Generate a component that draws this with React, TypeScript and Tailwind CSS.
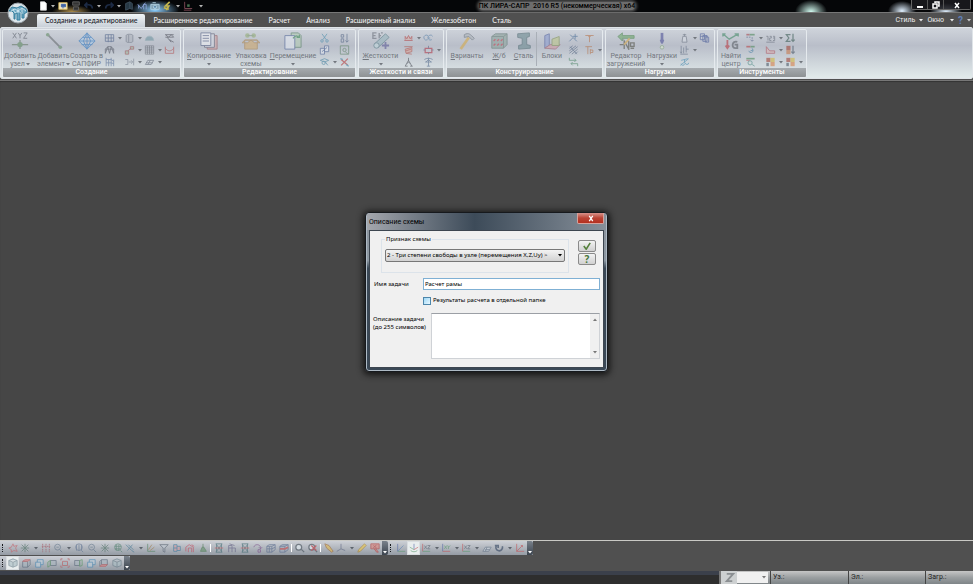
import React, { useState } from 'react';
import clsx from 'clsx';

// small drawings, all on a 12x12 grid
const glyphs: Record<string, React.ReactNode> = {
  grid: <path d="M1 2h10v8H1zM1 6h10M4.500 2v9M8 2v9" stroke="#3f5580" />,
  truss: <path d="M1 10V5l3-3h4l3 3v5M1 5h10M1 10l3-8 2 8 2-8 3 8" stroke="#4b4f5c" />,
  frame: <path d="M2 1v10M5 3v8M8 1v10M11 3v8M2 3h6l3 2M2 7h6l3 1" stroke="#506a94" />,
  cylinder: <path d="M2 3c0-2 8-2 8 0v7c0 2-8 2-8 0zM5 2v9" fill="#aeb4bd" stroke="#666f7e" />,
  copyNode: <path d="M1 7h4v4H1zM7 2h4v3H7zM4 7l4-3" stroke="#9b4c4c" fill="#9fb89f" />,
  arrowBox: <path d="M1 3h3v6H1M5 6h4M8 4l2 2-2 2M11 2v8" stroke="#6e7787" />,
  dome: <path d="M1 9c0-7 10-7 10 0z" fill="#6e94a0" stroke="#8ba6ae" />,
  mesh: <path d="M1 1h10v10H1zM1 3.500h10M1 6h10M1 8.500h10M3.500 1v10M6 1v10M8.500 1v10" stroke="#454a55" strokeWidth=".7" />,
  slab: <path d="M1 9l3-5h7l-3 5zM4 9l3-5M2 7h8" stroke="#596173" />,
  beams: <path d="M1 2h10M1 5h10M1 2l4 3 3-3 3 3M6 8l3 2 2 1M3 5l5 6" stroke="#3c3f49" />,
  span: <path d="M1 2v8h10V2M1 4c3 4 7 4 10 0" stroke="#b04848" />,
  scissors: <path d="M3 1l5 7M9 1L4 8M3 11a1.500 1.500 0 100-3 1.500 1.500 0 000 3zM9 11a1.500 1.500 0 100-3 1.500 1.500 0 000 3z" stroke="#3a86a8" />,
  pages: <path d="M1 4h5v7H1zM6 1h5v7H6zM3 8l6-5" stroke="#41598d" fill="#dfe4ee" />,
  mirror: <path d="M1 4l5-2 5 2-5 2zM3 7a2 2 0 104 0 2 2 0 10-4 0M7 6l3 4" stroke="#37799a" />,
  sort: <path d="M2 2h3v3H2zM2 7h3v4H2zM9 1v10M7 9l2 2 2-2" stroke="#44597c" />,
  lens: <path d="M1 1h10v10H1zM4 6a2 2 0 104 0 2 2 0 10-4 0M7 8l3 3" stroke="#52785a" />,
  cross: (
    <g>
      <path d="M2 3l8 7M10 2l-8 8" stroke="#b23b3b" strokeWidth="1.500" />
      <path d="M1 2l3 1M8 9l3 2" stroke="#3a86a8" strokeWidth="1.500" />
    </g>
  ),
  crown: <path d="M1 9h10M2 8V4l2 3 2-4 2 4 2-3v4" stroke="#b03a3a" fill="#d9a9a0" />,
  crab: <path d="M1 2h10M2 5l8-2v5l-7 2zM3 7l6-2M3 10l7 1" stroke="#b04a42" fill="#d6a49a" />,
  legs: <path d="M6 1v4M6 4l-4 7M6 4l4 7M4 8l2-2 2 2M2 11h3M8 11h3" stroke="#3d4149" />,
  rings: <path d="M6 4a3 3 0 10-1 4M11 4a3 3 0 10-1 4M5 6h3" stroke="#4d7aa5" />,
  node: (
    <g>
      <path d="M2 4h8v5H2z" stroke="#b23a4a" strokeWidth="1.500" />
      <path d="M6 1v3M6 9v2M0 6h2M10 6h2" stroke="#4f5b80" />
    </g>
  ),
  mast: <path d="M1 3c3-2 7-2 10 0M6 1v10M2 6h8M4 11h4M3 6l3-3 3 3" stroke="#4b6488" />,
  rebar: <path d="M2 2l8 8M8 1v6M5 4h6M1 10l4-4" stroke="#365f8d" />,
  hatch: <path d="M1 4l4-3M1 7l8-6M1 10l10-8M4 11l7-6M8 11l3-3M2 2l8 9" stroke="#4b5e7b" />,
  link: <path d="M1 4h8M7 2l2 2-2 2M11 8H3M5 6L3 8l2 2M1 1v3M11 8v3" stroke="#43805f" />,
  tee: <path d="M1 3h10M6 3v8M4 3l2 2 2-2" stroke="#b46a3c" />,
  tr: <path d="M1 2h8M4 2v9M7 5v6M7 6h3v3H7" stroke="#b46a3c" />,
  weight: <path d="M4 4h4l1 7H3zM6 1v3M4 2h4" stroke="#616a78" fill="#d5dae2" />,
  loads: <path d="M2 1v8M5 3v7M8 1v8M1 8l1 2 1-2M1 11h9M8 5h3" stroke="#59657b" />,
  scale: <path d="M2 4l8-2M6 3v4M2 8a2 2 0 104 0M7 7a2 2 0 104 0M1 10l10-8" stroke="#3b86ad" />,
  stack: <path d="M1 1h5v7H1zM4 3h5v7H4zM7 5h4v6H7zM1 4h9" stroke="#3b4f91" />,
  flags: (
    <g>
      <path d="M1 2h4" stroke="#a84a52" strokeWidth="2" />
      <path d="M5 2h6" stroke="#4f8a5c" strokeWidth="2" />
      <path d="M1 5h6M8 5v5M6 8l2 2 2-2" stroke="#4b5a80" strokeDasharray="2 1" />
    </g>
  ),
  rotate: (
    <g>
      <path d="M1 2h5" stroke="#b8484a" strokeWidth="2" />
      <path d="M6 2h5" stroke="#4f8a5c" strokeWidth="2" />
      <path d="M4 7a2.500 2.500 0 105-1M8 4l1 2-3 1" stroke="#38779c" />
    </g>
  ),
  inspect: (
    <g>
      <path d="M1 2h10" stroke="#4f8a5c" strokeWidth="2" />
      <path d="M1 4h4" stroke="#b8484a" />
      <path d="M3 7a2.500 2.500 0 105 0 2.500 2.500 0 10-5 0M8 9l3 2" stroke="#3a8078" />
    </g>
  ),
  numbers: <path d="M1 4h2v5M5 4h2v2H5v3h2M9 4h2v5H9M9 6h2M1 11h10" stroke="#5d6471" />,
  diagram: <path d="M1 10V2l4 5h6v3z" stroke="#ac4b55" fill="#d8b4b4" />,
  palette: (
    <g stroke="none">
      <path d="M1 1h5v5H1z" fill="#a2483b" />
      <path d="M6 1h5v5H6z" fill="#d1b541" />
      <path d="M6 6h5v5H6z" fill="#d8824a" />
      <path d="M1 7h3v4H1z" fill="#4c5968" />
    </g>
  ),
  sigma: <path d="M6 2H1l3 4-3 4h5M9 1v9M7 8l2 2 2-2" stroke="#3f5f58" strokeWidth="1.500" />,
  bars: (
    <g>
      <path d="M1 1h5v5H1z" fill="#a2483b" />
      <path d="M1 6h5v5H1z" fill="#c77a4e" />
      <path d="M9 1v9M7 8l2 2 2-2" stroke="#4c5968" strokeWidth="1.500" />
    </g>
  ),
  star: <path d="M6 1l1 3 4-1-2 3 2 4-4-1-3 2V8L1 6l3-1z" stroke="#c66068" />,
  burst: <path d="M6 1v10M1 6h10M2 2l8 8M10 2l-8 8" stroke="#4f7165" />,
  columns: <path d="M2 1v10M6 1v10M10 1v10M1 4h10" stroke="#a24b55" strokeDasharray="2 1" />,
  zoomOut: <path d="M2 5a3.500 3.500 0 107 0 3.500 3.500 0 10-7 0M8 8l3 3M4 5h3" stroke="#5d7187" />,
  zoomBars: <path d="M3 2v7M6 2v7M9 2v7M2 5a4 4 0 108 0 4 4 0 10-8 0M9 9l2 2" stroke="#5f7391" />,
  zoomMesh: <path d="M2 5a4 4 0 108 0 4 4 0 10-8 0M2 4h8M2 7h7M4 2v7M7 2v7M9 9l2 2" stroke="#4f7f6c" />,
  slash: <path d="M1 2l7 7M4 2l6 6M8 9l3 2M9 2L3 9" stroke="#3f7590" />,
  filterAxes: (
    <g>
      <path d="M2 1v9h9" stroke="#4d7f5b" />
      <path d="M3 8l4-6M5 9l5-4" stroke="#a07a45" />
    </g>
  ),
  axes: (
    <g>
      <path d="M2 1v9" stroke="#4a62a0" />
      <path d="M2 10h9" stroke="#57976a" />
      <path d="M2 10l7-7" stroke="#5b7fb5" />
    </g>
  ),
  axesRed: <path d="M2 1v9h9M2 10l7-7M7 3h2v2" stroke="#c04d50" />,
  axesXZ: (
    <g>
      <path d="M2 1v9" stroke="#c04d50" />
      <path d="M2 10h9" stroke="#57976a" />
      <path d="M4 3l3 4M7 3L4 7M8 3h3L8 7h3" stroke="#5d6673" />
    </g>
  ),
  axesXY: (
    <g>
      <path d="M2 1v9" stroke="#4a62a0" />
      <path d="M2 10h9" stroke="#c04d50" />
      <path d="M4 3l3 4M7 3L4 7M8 3l1 2 2-2M9 5v2" stroke="#57976a" />
    </g>
  ),
  isometry: (
    <g>
      <path d="M6 1v7" stroke="#4a62a0" />
      <path d="M6 8L1 5M2 9c2 2 6 2 8 0" stroke="#57976a" />
      <path d="M6 8l5-3" stroke="#c04d50" />
    </g>
  ),
  funnel: <path d="M1 2h10L7 6v5l-2-1V6z" stroke="#4f5a69" fill="#c4cbd4" />,
  parts: <path d="M2 2h4v8H2zM6 4h4v5H6M2 6h4" stroke="#36799e" fill="#d19da4" />,
  house: <path d="M1 10V5l4-3 5 3v6M4 11V6h4v5M8 2l3 2" stroke="#c44659" />,
  brush: <path d="M6 1v5M3 10l2-5h2l3 5z" stroke="#4c7a52" fill="#6b9370" />,
  hour: (
    <g>
      <path d="M2 1h8M2 11h8M3 1v10M9 1v10M3 2l6 8M9 2l-6 8" stroke="#416b72" />
      <path d="M1 6h10" stroke="#c04d50" />
    </g>
  ),
  portal: <path d="M2 11V3h4v8M6 6h4v5M2 6h4M3 1l6 2" stroke="#625f82" />,
  undoPart: <path d="M1 5c1-4 7-4 8 0v2M7 5l2 2 2-2M6 8h3v3H6z" stroke="#7a4b88" />,
  cage: <path d="M1 4h6v7H1zM4 4v7M1 7h6M1 4l3-2h7L7 4M11 2v6l-4 3M7 7l4-2" stroke="#56698c" />,
  cageRed: (
    <g>
      <path d="M1 4h6v7H1zM1 4l3-2h7L7 4M11 2v6l-4 3" stroke="#56698c" fill="#9fabbc" />
      <path d="M1 7h6l4-2" stroke="#c04d50" strokeWidth="2" />
    </g>
  ),
  isoCube: <path d="M6 1l5 2v6l-5 2-5-2V3zM1 3l5 2 5-2M6 5v6" stroke="#657985" fill="#a9bcc3" />,
  cubeTop: (
    <g>
      <path d="M2 4h6v7H2zM11 2v6l-3 3" stroke="#536273" fill="#a8b4be" />
      <path d="M2 4l3-2h6L8 4z" stroke="#bc5254" fill="#d9898a" />
    </g>
  ),
  cubeBlue: <path d="M2 5h6v6H2zM4 5V2h7v6H8" stroke="#3d83b1" fill="#c0ced8" />,
  cubeRed: <path d="M3 4h6v5H3zM1 3V1h2M9 1h2v2M1 9v2h2M9 11h2V9" stroke="#bc5254" fill="#a8b4be" />,
  cubeBottom: (
    <g>
      <path d="M3 2h7v6H3zM3 2L1 4v6M10 8l-2 2" stroke="#536273" fill="#a8b4be" />
      <path d="M1 10l2-2h7l-2 2z" stroke="#bc5254" fill="#d9898a" />
    </g>
  ),
  cubeGreen: (
    <g>
      <path d="M2 3h6v6H2z" stroke="#536273" fill="#a8b4be" />
      <path d="M8 3l3-1v7l-3 1z" stroke="#4e9358" />
    </g>
  ),
  cubeGreenLeft: (
    <g>
      <path d="M4 3h7v6H4z" stroke="#536273" fill="#a8b4be" />
      <path d="M4 3L1 5v6l3-2z" stroke="#4e9358" />
    </g>
  ),
  zoom: <path d="M1 5a3.500 3.500 0 107 0 3.500 3.500 0 10-7 0M8 8l3 3" stroke="#4f5962" fill="#e4edf3" strokeWidth="1.500" />,
  zoomOff: (
    <g>
      <path d="M1 5a3.500 3.500 0 107 0 3.500 3.500 0 10-7 0M8 8l3 3" stroke="#4f5962" fill="#e4edf3" strokeWidth="1.500" />
      <path d="M4 3l6 6M10 3L4 9" stroke="#c13a42" strokeWidth="1.500" />
    </g>
  ),
  torch: <path d="M1 1l5 2 5 7-2 1-6-5z" stroke="#9f6a3b" fill="#dfba55" />,
  axis3: <path d="M6 1v6l-5 3M6 7l5 2" stroke="#5b647f" />,
  pencil: <path d="M1 11l1-3 7-7 2 2-7 7z" stroke="#a78332" fill="#edc94d" />,
  stop: <path d="M1 1h10v6H1zM5 7l3 4h2L7 7M4 3l4 3M8 2L4 6" stroke="#b33e3e" fill="#d98881" />,
  turn: <path d="M3 3a4 4 0 107 1M1 3h4v3" stroke="#3b4c66" strokeWidth="2" />,
  plane: <path d="M1 10l3-5h7l-3 5zM4 8h5M6 5L4 10" stroke="#617184" fill="#c9d1da" />,
  file: <path d="M3 1h5l2 2v8H3z" stroke="#ddd" fill="#fff" />,
  open: (
    <g>
      <path d="M1 2h10v8H1z" stroke="#d8b75c" fill="#f4e9c4" />
      <path d="M4 4h5v3H4zM6 7v2" stroke="#3e63a5" fill="#3e63a5" />
    </g>
  ),
  save: <path d="M2 1h8v4H2zM3 7h6v4H3z" stroke="#666" fill="#333" />,
  undo: <path d="M10 9c0-5-5-5-8-4M4 2L1 5l3 3" stroke="#1d2b45" strokeWidth="2" />,
  redo: <path d="M2 9c0-5 5-5 8-4M8 2l3 3-3 3" stroke="#1d2b45" strokeWidth="2" />,
  book: <path d="M2 3l5-2v8l-5 2zM7 1l3 2v7l-3-1" stroke="#425360" fill="#273844" />,
  view: <path d="M1 4l4 5 5-7M2 9V5M8 10V4h3v6" stroke="#8fa7e0" />,
  camera: <path d="M1 4h10v6H1zM4 7a2 2 0 104 0 2 2 0 10-4 0M3 2h4" stroke="#b6d5e3" fill="#7fa0b4" />,
  bolt: <path d="M8 1L3 6h4l-3 5M1 8l6 2" stroke="#c5b64d" strokeWidth="2" />,
  chart: (
    <g>
      <path d="M2 1v8h9M1 11h9" stroke="#8b4f5d" />
      <path d="M5 7V4h3v3z" fill="#47704f" />
    </g>
  ),
};

const Glyph = ({ name, className }: { name: string; className?: string }) => (
  <svg viewBox="0 0 12 12" fill="none" aria-hidden="true" className={clsx('shrink-0', className)}>
    {glyphs[name]}
  </svg>
);

const Caret = ({ className }: { className?: string }) => (
  <svg viewBox="0 0 4 3" aria-hidden="true" className={clsx('h-[3px] w-1 shrink-0 fill-current', className)}>
    <path d="M0 0h4L2 2.500z" />
  </svg>
);

// large ribbon drawings, 20x20
const big: Record<string, React.ReactNode> = {
  addNode: (
    <>
      <path d="M2 1l4 6M6 1L2 7M8 1l2 3 2-3M10 4v3M14 1h4l-4 6h4" stroke="#555b66" />
      <path d="M1 14h18M10 9v10" stroke="#697b6b" strokeWidth="1.500" />
      <circle cx="10" cy="14" r="3" fill="#608b62" />
    </>
  ),
  addElement: (
    <>
      <path d="M3 3l14 14" stroke="#686d71" strokeWidth="2" />
      <circle cx="3" cy="3" r="2" fill="#668d68" />
      <circle cx="17" cy="17" r="2" fill="#668d68" />
    </>
  ),
  sapfir: <path d="M10 1l9 9-9 9-9-9zM10 1L6 10l4 9 4-9zM1 10h18M5 6h10M4 14h12M10 1v18" stroke="#3479c0" fill="#a8c9e8" />,
  copy: (
    <>
      <path d="M8 4h11v15H8z" fill="#d1a7a7" stroke="#94575c" />
      <path d="M5 2h11v15H5z" fill="#d7dbe4" stroke="#595a6e" />
      <path d="M1 1h11v14H1zM3 4h7M3 7h7M3 10h7" fill="#f2f3f6" stroke="#536083" />
    </>
  ),
  pack: (
    <>
      <path d="M3 9h14v10H3zM3 9L0 12h6l4-3 4 3h6l-3-3z" fill="#cfaa70" stroke="#a98450" />
      <circle cx="6" cy="4" r="2.500" fill="#94ad78" />
      <circle cx="13" cy="4" r="2.500" fill="#94ad78" />
      <path d="M6 4h7" stroke="#769375" />
    </>
  ),
  move: (
    <>
      <path d="M8 1h8l3 3v13H8z" fill="#b4ccb5" stroke="#517a60" />
      <path d="M1 4h11v15H1z" fill="#e3e8f1" stroke="#485f93" />
      <path d="M10 7c3-4 5-3 6-1M14 6h3V3" stroke="#3c8a54" strokeWidth="1.500" />
    </>
  ),
  stiff: (
    <>
      <path d="M5 1H1v6h4M1 4h3M8 1v6M8 4h2M12 1h-2" stroke="#6c717c" strokeWidth="1.500" />
      <path d="M3 13L15 2l4 4L7 17z" fill="#98b5bd" stroke="#557681" />
      <circle cx="5" cy="15" r="3" fill="#c0d7dd" stroke="#557681" />
      <path d="M15 11v8M11 15h8" stroke="#5c5c97" strokeWidth="2" />
    </>
  ),
  hammer: (
    <>
      <path d="M3 19L12 6" stroke="#d4aa4c" strokeWidth="3" />
      <path d="M7 3c5-3 7 0 11 4l-2 2-4-4-5 1z" fill="#adb4ba" stroke="#68717a" />
    </>
  ),
  concrete: (
    <>
      <path d="M2 5l4-3h13v12l-4 4H2z" fill="#8da39c" stroke="#5f7670" />
      <path d="M2 5h13v13M15 5l4-3" stroke="#617871" />
      <path d="M4 10l2-2M8 10l2-2M12 10l2-2M4 15l2-2M8 15l2-2M12 15l2-2" stroke="#bd3f50" strokeWidth="1.500" />
    </>
  ),
  steel: <path d="M3 2l13-1v4l-3 1v8l4 1v3L4 19v-4l4-1V7L3 6z" fill="#6d8b92" stroke="#4d686f" />,
  blocks: (
    <>
      <path d="M2 4l5-2v13l-5 3z" fill="#8f9fd0" stroke="#4e5f9d" />
      <path d="M2 18l6-4h11l-5 5z" fill="#cf9ba3" stroke="#9c5c6c" />
      <path d="M10 8l8-3v10h-8z" fill="#bdc78c" stroke="#7f9155" />
    </>
  ),
  editor: (
    <>
      <path d="M1 5l5-4v3h13v3H6v3z" fill="#6da76b" stroke="#4b854d" />
      <path d="M3 14h4M8 19V10l5 9v-9M15 12h4v4h-4zM15 18h4" stroke="#55564b" strokeWidth="1.500" />
      <path d="M8 14l6-7" stroke="#d5a64a" strokeWidth="2" />
    </>
  ),
  load: (
    <>
      <path d="M10 1v11" stroke="#4f5399" strokeWidth="3" />
      <path d="M8 9h4l-2 4z" fill="#4f5399" stroke="#4f5399" />
      <circle cx="10" cy="17" r="2" stroke="#81a37a" fill="#dbe7d2" />
    </>
  ),
  center: (
    <>
      <path d="M1 2l7 6 10-6M14 2h4v3M1 5V2h3" stroke="#458b69" strokeWidth="1.500" />
      <path d="M6 9v9M4 15l2 3 2-3" stroke="#b83d46" strokeWidth="2" />
      <path d="M17 11c-6-2-7 7-2 7h2v-4h-3" stroke="#5b6067" strokeWidth="2" />
    </>
  ),
};

type Big = { icon: string; lines: string[]; caret?: boolean; width: string; hotkey?: boolean };
// a trailing "+" on a small icon means it opens a menu
type Group = { title: string; width: string; big: Big[]; columns: string[][]; step: string };

const groups: Group[] = [
  {
    title: 'Создание',
    width: 'w-[179px]',
    big: [
      { icon: 'addNode', lines: ['Добавить', 'узел'], caret: true, width: 'w-[34px]' },
      { icon: 'addElement', lines: ['Добавить', 'элемент'], caret: true, width: 'w-[33px]' },
      { icon: 'sapfir', lines: ['Создать в', 'САПФИР'], width: 'w-[33px]' },
    ],
    columns: [['grid+', 'truss', 'frame'], ['cylinder+', 'copyNode+', 'arrowBox+'], ['dome', 'mesh+', 'slab+'], ['beams', 'span']],
    step: 'w-5',
  },
  {
    title: 'Редактирование',
    width: 'w-[173px]',
    big: [
      { icon: 'copy', lines: ['Копирование'], caret: true, width: 'w-[50px]', hotkey: true },
      { icon: 'pack', lines: ['Упаковка', 'схемы'], width: 'w-[34px]' },
      { icon: 'move', lines: ['Перемещение'], caret: true, width: 'w-[50px]', hotkey: true },
    ],
    columns: [['scissors', 'pages', 'mirror+'], ['sort', 'lens', 'cross']],
    step: 'w-5',
  },
  {
    title: 'Жесткости и связи',
    width: 'w-[86px]',
    big: [{ icon: 'stiff', lines: ['Жесткости'], caret: true, width: 'w-[43px]', hotkey: true }],
    columns: [['crown+', 'crab', 'legs'], ['rings', 'node+', 'mast']],
    step: 'w-5',
  },
  {
    title: 'Конструирование',
    width: 'w-[157px]',
    big: [
      { icon: 'hammer', lines: ['Варианты'], width: 'w-[40px]', hotkey: true },
      { icon: 'concrete', lines: ['Ж/б'], width: 'w-[24px]', hotkey: true },
      { icon: 'steel', lines: ['Сталь'], width: 'w-[25px]', hotkey: true },
      { icon: 'blocks', lines: ['Блоки'], width: 'w-[30px]' },
    ],
    columns: [['rebar', 'hatch', 'link'], ['tee', 'tr+']],
    step: 'w-4',
  },
  {
    title: 'Нагрузки',
    width: 'w-[110px]',
    big: [
      { icon: 'editor', lines: ['Редактор', 'загружений'], width: 'w-[40px]' },
      { icon: 'load', lines: ['Нагрузки'], caret: true, width: 'w-[32px]' },
    ],
    columns: [['weight+', 'loads+', 'scale'], ['stack']],
    step: 'w-5',
  },
  {
    title: 'Инструменты',
    width: 'w-[90px]',
    big: [{ icon: 'center', lines: ['Найти', 'центр'], width: 'w-[26px]' }],
    columns: [['flags+', 'rotate', 'inspect'], ['numbers+', 'diagram+', 'palette+'], ['sigma', 'bars', 'palette+']],
    step: 'w-5',
  },
];

const tabs = ['Создание и редактирование', 'Расширенное редактирование', 'Расчет', 'Анализ', 'Расширенный анализ', 'Железобетон', 'Сталь'];

const quick = ['file+', 'open', 'save', 'undo+', 'redo+', 'book', 'view', 'camera', 'bolt+', 'chart'];

const selectTools = [
  'star', 'burst+', 'columns', 'zoomOut+', 'zoomBars', 'zoomOut', 'burst', 'zoomMesh', 'slash+', 'filterAxes', 'funnel', 'parts', 'house', 'brush', '|',
  'hour', 'portal', 'hour', 'undoPart', 'cage', 'cageRed', '|', 'zoom', 'zoomOff', '|', 'torch', 'axis3+', 'pencil', 'stop',
];
const projectionTools = ['axes', '*isometry', 'axesXZ+', 'axesXY+', 'axesXZ+', 'plane', 'turn+', 'axesRed'];
const cubeTools = ['*isoCube', 'cubeTop', 'cubeBlue', 'cubeGreenLeft', 'cubeRed', 'cubeGreen', 'cubeBlue', 'cubeBottom', 'isoCube'];

function BigButton({ item }: { item: Big }) {
  const last = item.lines.length - 1;
  return (
    <button type="button" className={clsx('flex shrink-0 flex-col items-center whitespace-nowrap', item.width)}>
      <svg viewBox="0 0 20 20" fill="none" aria-hidden="true" className="mb-[2px] h-[18px] w-[18px] shrink-0 opacity-60">
        {big[item.icon]}
      </svg>
      {item.lines.map((line, i) => (
        <span key={line} className="flex items-center gap-px leading-[8px]">
          {item.hotkey ? (
            <span>
              <u>{line[0]}</u>
              {line.slice(1)}
            </span>
          ) : (
            line
          )}
          {item.caret && i === last && last > 0 && <Caret />}
        </span>
      ))}
      {item.caret && last === 0 && <Caret className="mt-[3px]" />}
    </button>
  );
}

function RibbonGroup({ group }: { group: Group }) {
  return (
    <section
      aria-label={group.title}
      className={clsx('flex shrink-0 flex-col overflow-hidden rounded-xs border border-[#e5eaee] text-[7px] text-[#72777e]', group.width)}
    >
      <div className="flex flex-1 pt-[2px]">
        {group.big.map((item) => (
          <React.Fragment key={item.icon}>
            {item.icon === 'blocks' && <span className="h-[34px] w-px bg-[#a9afb7]" />}
            <BigButton item={item} />
          </React.Fragment>
        ))}
        <div className="flex pt-px pl-px">
          {group.columns.map((column, c) => (
            <div key={c} className={clsx('flex shrink-0 flex-col gap-[2px]', group.step)}>
              {column.map((name) => {
                const menu = name.endsWith('+');
                const id = name.replace('+', '');
                return (
                  <button key={name} type="button" aria-label={id} className="flex h-[10px] items-center gap-[3px]">
                    <Glyph name={id} className="h-[10px] w-[11px] opacity-60" />
                    {menu && <Caret />}
                  </button>
                );
              })}
            </div>
          ))}
        </div>
      </div>
      <h2 className="flex h-[9px] shrink-0 items-center justify-center bg-linear-to-b from-[#a6abaf] to-[#8e9294] text-[7px] leading-[9px] font-medium text-white">
        {group.title}
      </h2>
    </section>
  );
}

function ToolStrip({ items, label }: { items: string[]; label: string }) {
  return (
    <div role="toolbar" aria-label={label} className="flex h-[14px] items-stretch bg-linear-to-b from-[#cdd0d6] to-[#959ca5] text-[#5d636c]">
      <span className="my-[3px] mr-[3px] ml-[2px] w-px border-l border-dotted border-[#16181b]" />
      {items.map((raw, i) => {
        if (raw === '|') return <span key={i} className="mx-px my-[3px] w-px bg-white" />;
        const id = raw.replace(/[*+]/g, '');
        return (
          <button
            key={i}
            type="button"
            aria-label={id}
            className={clsx('flex items-center justify-center', raw.endsWith('+') ? 'w-5 gap-1' : 'w-[13px]', raw[0] === '*' && 'border border-[#d9dde0] bg-[#e9edee]')}
          >
            <Glyph name={id} className="h-[10px] w-[10px] opacity-65" />
            {raw.endsWith('+') && <Caret />}
          </button>
        );
      })}
      <span className="ml-px flex w-[6px] items-end justify-center rounded-r-xs bg-linear-to-b from-[#7a828c] to-[#3c444e] pb-px text-white">
        <Caret />
      </span>
    </div>
  );
}

function TitleBar() {
  return (
    <header className="flex h-3 items-start bg-[#050608] bg-[radial-gradient(ellipse_20px_7px_at_72px_12px,#d9b25ccc,transparent),radial-gradient(ellipse_24px_10px_at_155px_10px,#8fd0ff,transparent),radial-gradient(ellipse_16px_12px_at_811px_12px,#d5fff4,transparent),radial-gradient(ellipse_14px_10px_at_902px_11px,#e0f0ff,transparent),radial-gradient(ellipse_16px_9px_at_946px_12px,#e0f0ff,transparent)]">
      <nav aria-label="Быстрый доступ" className="flex h-3 items-center pl-[37px] text-[#b5b5b5]">
        {quick.map((raw) => {
          const id = raw.replace('+', '');
          return (
            <button key={id} type="button" aria-label={id} className={clsx('flex items-center gap-[3px] pl-px', raw.endsWith('+') ? 'w-5' : 'w-[13px]')}>
              <Glyph name={id} className="h-[10px] w-[10px]" />
              {raw.endsWith('+') && <Caret />}
            </button>
          );
        })}
        <Caret className="ml-1" />
      </nav>
      <div className="flex flex-1 justify-center">
        <h1 className="mt-[2px] h-[8px] rounded-full bg-[#6d6d6d] text-[7px] leading-[9px] font-medium whitespace-pre text-black shadow-[0_0_3px_2px_#555]">
          ПК ЛИРА-САПР  2016 R5 (некоммерческая) x64
        </h1>
      </div>
      <div className="mr-[2px] flex h-[10px] divide-x divide-[#555] rounded-b-xs border border-t-0 border-[#666] bg-[#1b1c20cc] text-white">
        <button type="button" aria-label="Свернуть" className="flex w-4 items-center justify-center">
          <svg viewBox="0 0 8 8" className="h-2 w-2"><path d="M1 5h6v2H1z" fill="#fff" /></svg>
        </button>
        <button type="button" aria-label="Развернуть" className="flex w-4 items-center justify-center">
          <svg viewBox="0 0 8 8" className="h-2 w-2"><path d="M3 2V1h4v4H6M1 3h4v4H1z" stroke="#fff" strokeWidth="1.500" fill="none" /></svg>
        </button>
        <button type="button" aria-label="Закрыть" className="flex w-[26px] items-center justify-center">
          <svg viewBox="0 0 8 8" className="h-2 w-2"><path d="M2 2l4 5M6 2L2 7" stroke="#fff" strokeWidth="1.500" /></svg>
        </button>
      </div>
    </header>
  );
}

function SchemeDialog() {
  const [name, setName] = useState('Расчет рамы');
  const [separate, setSeparate] = useState(false);
  const [description, setDescription] = useState('');

  return (
    <div className="fixed inset-0 flex items-center justify-center">
      <form
        role="dialog"
        aria-labelledby="dialog-title"
        onSubmit={(e) => e.preventDefault()}
        className="w-[243px] rounded-[4px] border border-[#16191d] bg-linear-to-b from-[#8b929b] via-[#8d98a2] via-30% to-[#3a4856] to-35% px-[3px] pb-[3px] font-['Noto_Sans',sans-serif] text-[6px] text-black shadow-[0_1px_6px_2px_#161616] inset-ring inset-ring-[#aebac5]"
      >
        <div className="-mx-[2px] flex h-[17px] items-start justify-between rounded-t-[3px] bg-linear-to-r from-[#a4a7ad] via-[#3d4b59] via-45% to-[#87909a] pl-[2px]">
          <h2 id="dialog-title" className="pt-1 font-[Roboto,sans-serif] text-[7px] leading-[10px]">
            Описание схемы
          </h2>
          <button
            type="button"
            aria-label="Закрыть"
            className="mr-[2px] flex h-[11px] w-[27px] items-center justify-center rounded-b-xs border border-t-0 border-[#d7a29c] bg-linear-to-b from-[#d8928b] via-[#b94335] via-50% to-[#b5301f]"
          >
            <svg viewBox="0 0 8 8" className="h-[7px] w-2"><path d="M2 1l4 6M6 1L2 7" stroke="#fff" strokeWidth="1.500" /></svg>
          </button>
        </div>

        <div className="flex flex-col border border-[#3d4650] bg-[#f0f0f0] pt-1 pr-[3px] pb-2 pl-[3px]">
          <div className="flex justify-between">
            <fieldset className="ml-2 h-[38px] w-[188px] border border-[#dce3ea] px-[3px]">
              <legend className="px-px leading-[8px]">Признак схемы</legend>
              <div className="relative mt-[6px]">
                <select
                  aria-label="Признак схемы"
                  className="block h-[13px] w-full appearance-none rounded-xs border border-[#777] bg-linear-to-b from-[#f3f3f3] to-[#d2d2d2] pr-2 pl-px text-[6px] leading-[11px]"
                >
                  <option>2 - Три степени свободы в узле (перемещения X,Z,Uy) &gt;</option>
                </select>
                <Caret className="pointer-events-none absolute top-[5px] right-[3px]" />
              </div>
            </fieldset>
            <div className="mt-[5px] mr-1 flex flex-col gap-px">
              <button type="submit" aria-label="Применить" className="flex h-3 w-[18px] items-center justify-center rounded-xs border border-[#8a8a8a] bg-linear-to-b from-[#f3f3f3] to-[#d0d0d0]">
                <svg viewBox="0 0 10 10" className="h-2 w-2"><path d="M1 5l3 4 5-8" stroke="#55803c" strokeWidth="2" fill="none" /></svg>
              </button>
              <button type="button" aria-label="Справка" className="flex h-3 w-[18px] items-center justify-center rounded-xs border border-[#8a8a8a] bg-linear-to-b from-[#f3f3f3] to-[#d0d0d0] text-[10px] leading-[10px] font-bold text-[#47763a]">
                ?
              </button>
            </div>
          </div>

          <div className="mt-[5px] flex items-center">
            <label htmlFor="task-name" className="w-[50px] pl-px">Имя задачи</label>
            <input
              id="task-name"
              value={name}
              onChange={(e) => setName(e.target.value)}
              className="h-3 min-w-0 flex-1 border border-[#7fb0d4] bg-white px-px text-[6px] leading-[10px] outline-none"
            />
          </div>

          <label className="mt-[6px] ml-[50px] flex h-[9px] items-center gap-[2px] whitespace-nowrap">
            <input
              type="checkbox"
              checked={separate}
              onChange={(e) => setSeparate(e.target.checked)}
              className="h-2 w-2 appearance-none border border-[#4d86aa] bg-linear-to-br from-[#9dd8f6] to-[#e9f8ff] checked:bg-[#3b82b0]"
            />
            Результаты расчета в отдельной папке
          </label>

          <div className="mt-2 flex">
            <label htmlFor="task-text" className="w-[58px] pt-[2px] leading-[8px] whitespace-nowrap">
              Описание задачи
              <br />
              (до 255 символов)
            </label>
            <div className="flex h-[46px] flex-1 border border-[#cfd2d6] border-t-[#9b9fa5] bg-white">
              <textarea
                id="task-text"
                maxLength={255}
                value={description}
                onChange={(e) => setDescription(e.target.value)}
                className="min-w-0 flex-1 resize-none p-px text-[6px] leading-[8px] outline-none"
              />
              <div className="flex w-[9px] flex-col items-center justify-between bg-[#f0f0f0] py-1 text-[#777]">
                <Caret className="rotate-180" />
                <Caret />
              </div>
            </div>
          </div>
        </div>
      </form>
    </div>
  );
}

export default function App() {
  const [active, setActive] = useState(0);

  return (
    <div className="flex h-screen flex-col overflow-hidden bg-[#505050] font-[Roboto,sans-serif] text-[7px]">
      <div className="relative">
        <TitleBar />

        <div className="flex h-[15px] items-end border-t border-[#777] bg-[#505050] pl-[37px]">
          <div role="tablist" className="flex items-end font-[Lato,'Liberation_Sans',sans-serif]">
            {tabs.map((tab, i) => (
              <button
                key={tab}
                type="button"
                role="tab"
                aria-selected={i === active}
                onClick={() => setActive(i)}
                className={clsx(
                  'h-[13px] rounded-t-xs px-2 text-[7px] leading-[13px] whitespace-nowrap',
                  i === active ? 'bg-linear-to-b from-[#f1f5f7] to-[#c9d0d8] font-semibold text-[#2c2f35]' : 'font-medium text-[#f0f0f0]'
                )}
              >
                {tab}
              </button>
            ))}
          </div>
          <div className="mr-[2px] ml-auto flex h-[13px] items-center gap-1 text-[#eee]">
            <button type="button" className="flex items-center gap-1">Стиль <Caret /></button>
            <button type="button" className="flex items-center gap-[6px]">Окно <Caret /></button>
            <button type="button" aria-label="Справка" className="flex items-center gap-1 text-[10px] leading-[12px] font-bold text-[#5f7fb8]">
              <span>?</span>
              <Caret className="text-[#ccc]" />
            </button>
          </div>
        </div>

        {/* application button sits over the title and tab rows */}
        <button type="button" aria-label="Меню приложения" className="absolute top-[2px] left-[7px] h-[22px] w-[22px] rounded-full">
          <svg viewBox="0 0 22 22" fill="none">
            <circle cx="11" cy="11" r="10" fill="#dce5ea" stroke="#9aa4ab" />
            <path d="M2 9l3-4 5 1 4-2 5 3 1 3-3 2v4h-2v-5l-2-1v8h-3v-7l-2 1v5H7v-6l-2-2z" fill="#6aa6c1" stroke="#357e9e" />
            <path d="M4 9l4-2 3 2 4-3 4 3M8 11l3-2 3 2M11 6v5M6 7l2 4M15 7v5" stroke="#e7f5fb" strokeWidth=".7" />
          </svg>
        </button>
      </div>

      <div className="flex h-[52px] gap-[2px] rounded-xs border border-[#dfe4e8] bg-linear-to-b from-[#cfd4db] via-[#b9bec9] via-35% to-[#e2ebeb] px-px pt-px">
        {groups.map((group) => (
          <RibbonGroup key={group.title} group={group} />
        ))}
      </div>

      <main className="mt-px flex-1 border-t border-[#777] bg-[#464646] inset-shadow-[0_1px_1px_#333]" />

      <div className="h-[31px] border-t border-[#c9c9c5] bg-[#505050]">
        <div className="flex">
          <ToolStrip items={selectTools} label="Выбор" />
          <ToolStrip items={projectionTools} label="Проекция" />
        </div>
        <div className="mt-px flex">
          <ToolStrip items={cubeTools} label="Вид" />
        </div>
      </div>

      <footer className="flex h-[13px] justify-end border-t-[4px] border-[#3b404b] bg-[#2e2e2e]">
        <div className="-mt-1 flex w-[254px] items-stretch border-l-2 border-[#777] bg-linear-to-b from-[#c6c6c6] via-[#9b9fa1] to-[#7f8588] leading-[13px] text-[#222]">
          <button type="button" aria-label="Загружение" className="flex w-4 items-center justify-center bg-[#cdd0d1]">
            <svg viewBox="0 0 12 12" fill="none" className="h-[11px] w-[11px]"><path d="M3 2h7L3 10h6" stroke="#8b8f92" strokeWidth="2" /></svg>
          </button>
          <button type="button" aria-label="Номер" className="my-px flex w-[31px] items-center justify-end bg-[#f0f0f0] pr-[2px] text-[#777]">
            <Caret />
          </button>
          <span className="ml-[2px] w-[78px] border-l border-[#444] pl-[2px]">Уз.:</span>
          <span className="w-[77px] border-l border-[#444] pl-[2px]">Эл.:</span>
          <span className="flex-1 border-l border-[#444] pl-[2px]">Загр.:</span>
        </div>
      </footer>

      <SchemeDialog />
    </div>
  );
}
